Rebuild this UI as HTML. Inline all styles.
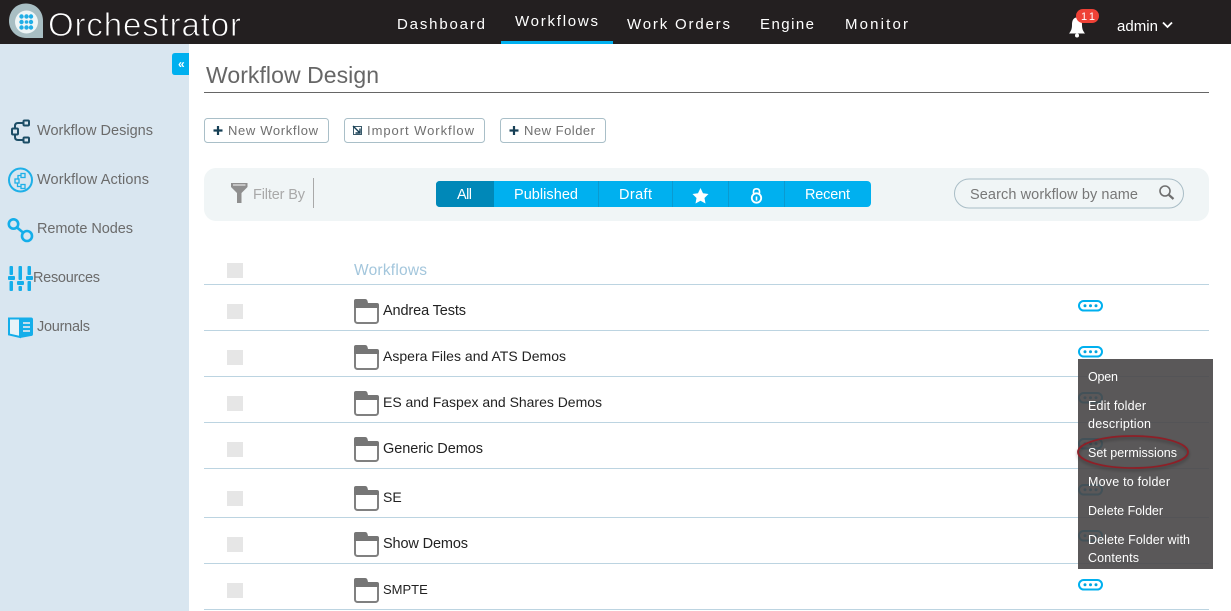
<!DOCTYPE html>
<html><head><meta charset="utf-8"><title>Orchestrator</title>
<style>
html,body{margin:0;padding:0;background:#fff;width:1231px;height:611px;overflow:hidden}
svg{display:block}
text{font-family:"Liberation Sans",sans-serif}
.nav text{fill:#fff;font-size:15px}
.side text{fill:#6b6b6b;font-size:14.5px}
.btn text{fill:#6f6f6f;font-size:13px}
.seg text{fill:#fff;font-size:14.5px}
.row text{fill:#222;font-size:14.5px}
.menu text{fill:#fff;font-size:12.5px}
</style></head><body>
<svg width="1231" height="611" viewBox="0 0 1231 611" xmlns="http://www.w3.org/2000/svg">
<defs>
<g id="folder"><rect x="1" y="5" width="23" height="19" rx="2.500" fill="#fff" stroke="#808080" stroke-width="2"/><path d="M0 10V2Q0 0 2 0H11Q13 0 13.500 2L14 4H23Q25 4 25 6V9H0Z" fill="#767676"/></g>
<g id="dots"><rect x="1" y="1" width="23" height="9.500" rx="4.700" fill="#fff" stroke="#00b0ef" stroke-width="2"/><circle cx="7" cy="5.700" r="1.500" fill="#00a5e0"/><circle cx="12.500" cy="5.700" r="1.500" fill="#00a5e0"/><circle cx="18" cy="5.700" r="1.500" fill="#00a5e0"/></g>
<filter id="sh" x="-20%" y="-40%" width="140%" height="180%"><feGaussianBlur stdDeviation="1.500"/></filter>
</defs>

<rect width="1231" height="611" fill="#fff"/>
<rect width="1231" height="44" fill="#231f20"/>
<rect x="0" y="44" width="189" height="567" fill="#d9e6f0"/>

<!-- logo -->
<path d="M26 3.500C15 3.500 9 12 9 21C9 31 17 38 26 38H43V21C43 11 36 3.500 26 3.500Z" fill="#a8bec3"/>
<circle cx="26.500" cy="22" r="11.500" fill="#eef5f6"/>
<g fill="#21aee6">
<circle cx="21.500" cy="16.500" r="2.200"/><circle cx="26.500" cy="16.500" r="2.200"/><circle cx="31" cy="16.500" r="2.200"/>
<circle cx="21.500" cy="22" r="2.200"/><circle cx="26.500" cy="22" r="1.800"/><circle cx="31" cy="22" r="2.200"/>
<circle cx="21.500" cy="27.500" r="2.200"/><circle cx="26.500" cy="27.500" r="2.200"/><circle cx="31" cy="27.500" r="2.200"/>
</g>
<text x="48" y="36" font-size="33" fill="#fff" stroke="#231f20" stroke-width=".9" textLength="193">Orchestrator</text>

<!-- nav -->
<g class="nav">
<text x="397" y="29" textLength="88">Dashboard</text>
<text x="515" y="26" textLength="83">Workflows</text>
<text x="627" y="29" textLength="103">Work Orders</text>
<text x="760" y="29" textLength="54">Engine</text>
<text x="845" y="29" textLength="63">Monitor</text>
</g>
<rect x="501" y="41" width="112" height="3" fill="#00b0ef"/>

<!-- bell -->
<path d="M1077 17.500C1073 17.500 1072 21 1072 25C1072 29 1071 31 1069 33.500H1085C1083 31 1082 29 1082 25C1082 21 1081 17.500 1077 17.500Z" fill="#fff"/>
<circle cx="1077" cy="35.500" r="2" fill="#fff"/>
<rect x="1076" y="9" width="23" height="14" rx="7" fill="#ef4136"/>
<text x="1081" y="20" font-size="11" fill="#fff" textLength="14">11</text>
<text x="1117" y="31" font-size="15" fill="#fff" textLength="41">admin</text>
<path d="M1163 22.500L1167.500 27L1172 22.500" fill="none" stroke="#fff" stroke-width="1.800"/>

<!-- collapse -->
<path d="M189 53H175Q172 53 172 56V72Q172 75 175 75H189Z" fill="#00b0ef"/>
<text x="178" y="68" font-size="12" font-weight="bold" fill="#fff">«</text>

<!-- sidebar -->
<g class="side">
<text x="37" y="135" textLength="116">Workflow Designs</text>
<text x="37" y="184" textLength="112">Workflow Actions</text>
<text x="37" y="233" textLength="96">Remote Nodes</text>
<text x="33" y="282" textLength="67">Resources</text>
<text x="37" y="331" textLength="53">Journals</text>
</g>
<g fill="none" stroke="#1b4d66" stroke-width="2">
<rect x="23.500" y="120.500" width="5.500" height="5" rx="1"/>
<rect x="12" y="128.500" width="6" height="6" rx="1"/>
<rect x="23.500" y="137.500" width="5.500" height="5" rx="1"/>
<path d="M23.500 123H18Q15 123 15 126V128.500M15 134.500V137Q15 140 18 140H23.500"/>
</g>
<g fill="none" stroke="#1eb0e8">
<circle cx="20.500" cy="180" r="11.500" stroke-width="2"/>
<rect x="21" y="173.500" width="4" height="4" stroke-width="1.300"/>
<rect x="15" y="179" width="4" height="4" stroke-width="1.300"/>
<rect x="21" y="184.500" width="4" height="4" stroke-width="1.300"/>
<path d="M21 175.500H18V179M17.500 183V186.500H21" stroke-width="1.300"/>
</g>
<g fill="none" stroke="#14aeea" stroke-width="2.600">
<circle cx="13.500" cy="224" r="4.700"/><circle cx="27" cy="236" r="5"/><path d="M17 227.500L23 232.500"/>
</g>
<g fill="#14aeea">
<rect x="9.500" y="266" width="3.500" height="9" rx="1"/><rect x="9.500" y="281" width="3.500" height="10" rx="1"/><rect x="8" y="276" width="7" height="4" rx="1"/>
<rect x="18.500" y="266" width="3.500" height="14" rx="1"/><rect x="18.500" y="286" width="3.500" height="5" rx="1"/><rect x="17" y="281" width="7" height="4" rx="1"/>
<rect x="27.500" y="266" width="3.500" height="9" rx="1"/><rect x="27.500" y="281" width="3.500" height="10" rx="1"/><rect x="26" y="276" width="7" height="4" rx="1"/>
</g>
<path d="M9 318.500H20V337L9 334.500Z" fill="#e8f3f8" stroke="#14aeea" stroke-width="2"/>
<path d="M20 317.500H31Q33 317.500 33 319.500V334Q33 336 31 336L20 338Z" fill="#14aeea"/>
<path d="M23 323H30M23 327H30M23 331H30" stroke="#d9e6f0" stroke-width="1.800"/>

<!-- title -->
<text x="206" y="83" font-size="23" fill="#666" textLength="173">Workflow Design</text>
<rect x="204" y="92" width="1005" height="1" fill="#666"/>

<!-- buttons -->
<g fill="#fff" stroke="#a9bfc8">
<rect x="204.500" y="118.500" width="124" height="24" rx="3"/>
<rect x="344.500" y="118.500" width="140" height="24" rx="3"/>
<rect x="500.500" y="118.500" width="105" height="24" rx="3"/>
</g>
<path d="M218 126V135M213.500 130.500H222.500M514 126V135M509.500 130.500H518.500" stroke="#163f55" stroke-width="2.200"/>
<rect x="353.500" y="126.500" width="8" height="8" fill="none" stroke="#3a5a6a"/>
<path d="M353 126L360 133M360 128.500V133H355.500" fill="none" stroke="#163f55" stroke-width="1.400"/>
<g class="btn">
<text x="228" y="135" textLength="90">New Workflow</text>
<text x="367" y="135" textLength="107">Import Workflow</text>
<text x="524" y="135" textLength="71">New Folder</text>
</g>

<!-- filter panel -->
<rect x="204" y="168" width="1005" height="53" rx="12" fill="#f0f5f6"/>
<path d="M231 183H247.500V187L241.500 193V203H237V193L231 187Z" fill="#8f8f8f"/>
<path d="M233 185H245.500" stroke="#d5d5d5" stroke-width="1.500"/>
<text x="253" y="199" font-size="14.500" fill="#a9a9a9" textLength="52">Filter By</text>
<rect x="313" y="178" width="1" height="30" fill="#a9a9a9"/>

<rect x="436" y="181" width="435" height="26" rx="4" fill="#00b0ef"/>
<path d="M494 181H440Q436 181 436 185V203Q436 207 440 207H494Z" fill="#0088b8"/>
<g fill="#0a9ad0"><rect x="598" y="181" width="1" height="26"/><rect x="672" y="181" width="1" height="26"/><rect x="728" y="181" width="1" height="26"/><rect x="784" y="181" width="1" height="26"/></g>
<g class="seg">
<text x="457" y="199" textLength="15">All</text>
<text x="514" y="199" textLength="64">Published</text>
<text x="619" y="199" textLength="33">Draft</text>
<text x="805" y="199" textLength="45">Recent</text>
</g>
<path d="M700.500 188L703 193.300L708.500 194L704.500 198L705.500 203.500L700.500 200.800L695.500 203.500L696.500 198L692.500 194L698 193.300Z" fill="#fff"/>
<circle cx="756.500" cy="198" r="4.700" fill="none" stroke="#fff" stroke-width="1.800"/>
<path d="M753.500 193.500V191.500Q753.500 188.800 756.500 188.800Q759.500 188.800 759.500 191.500V193.500" fill="none" stroke="#fff" stroke-width="1.600"/>
<path d="M756.500 196.500V200.500" stroke="#fff" stroke-width="1.600"/>

<rect x="954.500" y="179" width="229" height="29" rx="14.500" fill="#f0f5f6" stroke="#a9bdc6"/>
<text x="970" y="199" font-size="14.500" fill="#777" textLength="168">Search workflow by name</text>
<circle cx="1165" cy="191" r="5" fill="none" stroke="#6f6f6f" stroke-width="1.600"/>
<path d="M1169 195L1173.500 199" stroke="#6f6f6f" stroke-width="2.200"/>

<!-- table -->
<rect x="227" y="263" width="16" height="15" fill="#e6e6e6"/>
<text x="354" y="275" font-size="15.500" fill="#a3c6dc" textLength="73">Workflows</text>
<g fill="#bcd4e1">
<rect x="204" y="284" width="1005" height="1"/><rect x="204" y="330" width="1005" height="1"/>
<rect x="204" y="376" width="1005" height="1"/><rect x="204" y="422" width="1005" height="1"/>
<rect x="204" y="468" width="1005" height="1"/><rect x="204" y="517" width="1005" height="1"/>
<rect x="204" y="563" width="1005" height="1"/><rect x="204" y="609" width="1005" height="1"/>
</g>
<g fill="#e6e6e6">
<rect x="227" y="304" width="16" height="15"/><rect x="227" y="350" width="16" height="15"/>
<rect x="227" y="396" width="16" height="15"/><rect x="227" y="442" width="16" height="15"/>
<rect x="227" y="491" width="16" height="15"/><rect x="227" y="537" width="16" height="15"/>
<rect x="227" y="583" width="16" height="15"/>
</g>
<use href="#folder" x="354" y="299"/><use href="#folder" x="354" y="345"/><use href="#folder" x="354" y="391"/>
<use href="#folder" x="354" y="437"/><use href="#folder" x="354" y="486"/><use href="#folder" x="354" y="532"/>
<use href="#folder" x="354" y="578"/>
<g class="row">
<text x="383" y="315" textLength="83">Andrea Tests</text>
<text x="383" y="361" font-size="14" style="font-size:14px" textLength="183">Aspera Files and ATS Demos</text>
<text x="383" y="407" style="font-size:14px" textLength="219">ES and Faspex and Shares Demos</text>
<text x="383" y="453" textLength="100">Generic Demos</text>
<text x="383" y="502" style="font-size:14px">SE</text>
<text x="383" y="548" textLength="85">Show Demos</text>
<text x="383" y="594" style="font-size:13px">SMPTE</text>
</g>
<use href="#dots" x="1078" y="300"/><use href="#dots" x="1078" y="346"/><use href="#dots" x="1078" y="392"/>
<use href="#dots" x="1078" y="438"/><use href="#dots" x="1078" y="484"/><use href="#dots" x="1078" y="530"/>
<use href="#dots" x="1078" y="579"/>

<!-- context menu -->
<rect x="1078" y="359" width="135" height="210" fill="#4a4749" fill-opacity=".91"/>
<g class="menu">
<text x="1088" y="381" textLength="30">Open</text>
<text x="1088" y="410" textLength="58">Edit folder</text>
<text x="1088" y="428" textLength="63">description</text>
<text x="1088" y="457" textLength="89">Set permissions</text>
<text x="1088" y="486" textLength="82">Move to folder</text>
<text x="1088" y="515" textLength="75">Delete Folder</text>
<text x="1088" y="544" textLength="102">Delete Folder with</text>
<text x="1088" y="562" textLength="51">Contents</text>
</g>
<ellipse cx="1133" cy="454" rx="55" ry="16" fill="none" stroke="#000" stroke-opacity=".3" stroke-width="2" filter="url(#sh)"/>
<ellipse cx="1133" cy="452" rx="55" ry="16" fill="none" stroke="#8e1f27" stroke-width="1.800"/>
</svg>
</body></html>
